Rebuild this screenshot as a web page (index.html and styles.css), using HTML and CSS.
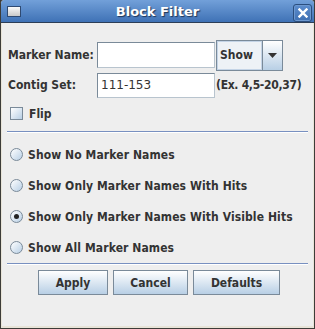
FILE: index.html
```html
<!DOCTYPE html>
<html lang="en">
<head>
    <meta charset="UTF-8">
    <title>Block Filter</title>
    <link rel="stylesheet" href="styles.css">
</head>
<body>
    <div class="window">
        <!-- title bar -->
        <div class="titlebar">
            <span class="win-icon"></span>
            <span class="win-title">Block Filter</span>
            <span class="win-close">
                <svg width="10" height="10" viewBox="0 0 10 10">
                    <path d="M1.5 1.5 L8.5 8.5 M8.5 1.5 L1.5 8.5" stroke="#fff" stroke-width="2.4" stroke-linecap="square"/>
                </svg>
            </span>
        </div>

        <div class="content">
            <!-- marker / contig fields -->
            <div class="field-row row-marker">
                <label class="field-label">Marker Name:</label>
                <input type="text" class="text-field">
                <div class="combo">
                    <span class="combo-value">Show</span>
                    <span class="combo-arrow">
                        <svg width="9" height="5" viewBox="0 0 9 5"><path d="M0 0 H9 L4.5 5 Z" fill="#333"/></svg>
                    </span>
                </div>
            </div>
            <div class="field-row row-contig">
                <label class="field-label">Contig Set:</label>
                <input type="text" class="text-field" value="111-153">
                <span class="field-hint">(Ex. 4,5-20,37)</span>
            </div>
            <div class="check-row">
                <span class="check-box"></span>
                <span class="check-label">Flip</span>
            </div>

            <div class="separator sep-top"></div>

            <!-- marker name options -->
            <div class="radio-list">
                <div class="radio-row"><span class="radio"></span>Show No Marker Names</div>
                <div class="radio-row"><span class="radio"></span>Show Only Marker Names With Hits</div>
                <div class="radio-row"><span class="radio checked"></span>Show Only Marker Names With Visible Hits</div>
                <div class="radio-row"><span class="radio"></span>Show All Marker Names</div>
            </div>

            <div class="separator"></div>

            <div class="button-row">
                <button class="dlg-btn btn-apply">Apply</button>
                <button class="dlg-btn btn-cancel">Cancel</button>
                <button class="dlg-btn btn-defaults">Defaults</button>
            </div>
        </div>
    </div>
</body>
</html>
```
FILE: styles.css
```css
* {
    margin: 0;
    padding: 0;
    box-sizing: border-box;
}

body {
    background-color: #3d3c38;
    font-family: "DejaVu Sans Condensed", "DejaVu Sans", sans-serif;
    font-size: 12px;
    font-weight: bold;
    color: #333;
    white-space: nowrap;
}

.window {
    width: 315px;
    height: 329px;
    background-color: #e8e4d8;
    border: 1px solid #3d3c38;
    border-top: none;
    border-radius: 4px 4px 0 0;
    overflow: hidden;
    display: flex;
    flex-direction: column;
}

/* title bar */
.titlebar {
    height: 23px;
    margin: 0 -1px;
    border-radius: 4px 4px 0 0;
    background: linear-gradient(#72a0d9, #3f72b6);
    border-bottom: 1px solid #2c3e57;
    display: flex;
    align-items: center;
    position: relative;
}

.win-icon {
    position: absolute;
    left: 7px;
    top: 6px;
    width: 14px;
    height: 11px;
    border: 1px solid #2f4a72;
    background: linear-gradient(#fafafa, #c9c9c9);
}

.win-title {
    flex: 1;
    text-align: center;
    color: #fff;
    font-family: "DejaVu Sans", sans-serif;
    font-size: 13px;
    text-shadow: 1px 1px 1px #1e3658;
    padding-top: 1px;
}

.win-close {
    position: absolute;
    right: 3px;
    top: 4px;
    width: 19px;
    height: 18px;
    border: 1px solid #2b4e7e;
    border-radius: 3px;
    box-shadow: inset 0 0 0 1px #6c98d0;
    background: linear-gradient(#5d8dcd, #3f70b2);
    display: flex;
    align-items: center;
    justify-content: center;
}

/* dialog body */
.content {
    flex: 1;
    margin: 0 1px 2px;
    background-color: #eeeeee;
    padding: 16px 4px 0 3px;
}

.field-row {
    display: flex;
    align-items: center;
}

.row-marker {
    height: 32px;
}

.row-contig {
    height: 26px;
    margin-top: 1px;
}

.field-label {
    width: 92px;
    padding-left: 3px;
}

.text-field {
    width: 118px;
    height: 26px;
    border: 1px solid #7a8a99;
    border-right-color: #b8c4ce;
    border-bottom-color: #b8c4ce;
    background-color: #fff;
    font-family: "DejaVu Sans", sans-serif;
    font-size: 12px;
    font-weight: normal;
    color: #333;
    padding: 0 3px;
    outline: none;
}

.row-contig .text-field {
    height: 25px;
}

.combo {
    margin-left: 1px;
    width: 67px;
    height: 31px;
    border: 1px solid #7a8a99;
    display: flex;
}

.combo-value {
    flex: 1;
    display: flex;
    align-items: center;
    padding-left: 3px;
    background-color: #eef2f6;
    box-shadow: inset 0 0 0 1px #c4d4e6;
    border-right: 1px solid #7a8a99;
}

.combo-arrow {
    width: 19px;
    display: flex;
    align-items: center;
    justify-content: center;
    background: linear-gradient(#ffffff, #b8cfe5);
}

.field-hint {
    margin-left: 1px;
    letter-spacing: -0.3px;
}

.check-row {
    display: flex;
    align-items: center;
    height: 31px;
    padding-left: 5px;
}

.check-box {
    width: 13px;
    height: 13px;
    border: 1px solid #7a8a99;
    background: linear-gradient(135deg, #ffffff, #b8cfe5);
    margin-right: 6px;
}

.separator {
    margin: 0 1px 0 2px;
    border-top: 1px solid #7890c0;
    border-bottom: 1px solid #fff;
}

.sep-top {
    margin-top: 2px;
}

/* radio options */
.radio-list {
    padding-top: 6px;
}

.radio-row {
    display: flex;
    align-items: center;
    height: 31px;
    padding-left: 5px;
    letter-spacing: 0.1px;
}

.radio {
    width: 13px;
    height: 13px;
    border: 1px solid #7a8a99;
    border-radius: 50%;
    background: linear-gradient(135deg, #ffffff, #b8cfe5);
    margin-right: 5px;
    display: flex;
    align-items: center;
    justify-content: center;
}

.radio.checked::after {
    content: "";
    width: 5px;
    height: 5px;
    border-radius: 50%;
    background-color: #222;
}

/* buttons */
.button-row {
    display: flex;
    gap: 5px;
    padding: 5px 0 0 33px;
}

.dlg-btn {
    height: 25px;
    border: 1px solid #7a8a99;
    background: linear-gradient(#ffffff, #b8cfe5);
    font-family: "DejaVu Sans Condensed", "DejaVu Sans", sans-serif;
    font-size: 12px;
    font-weight: bold;
    color: #333;
}

.btn-apply {
    width: 70px;
}

.btn-cancel {
    width: 75px;
}

.btn-defaults {
    width: 87px;
}
```
